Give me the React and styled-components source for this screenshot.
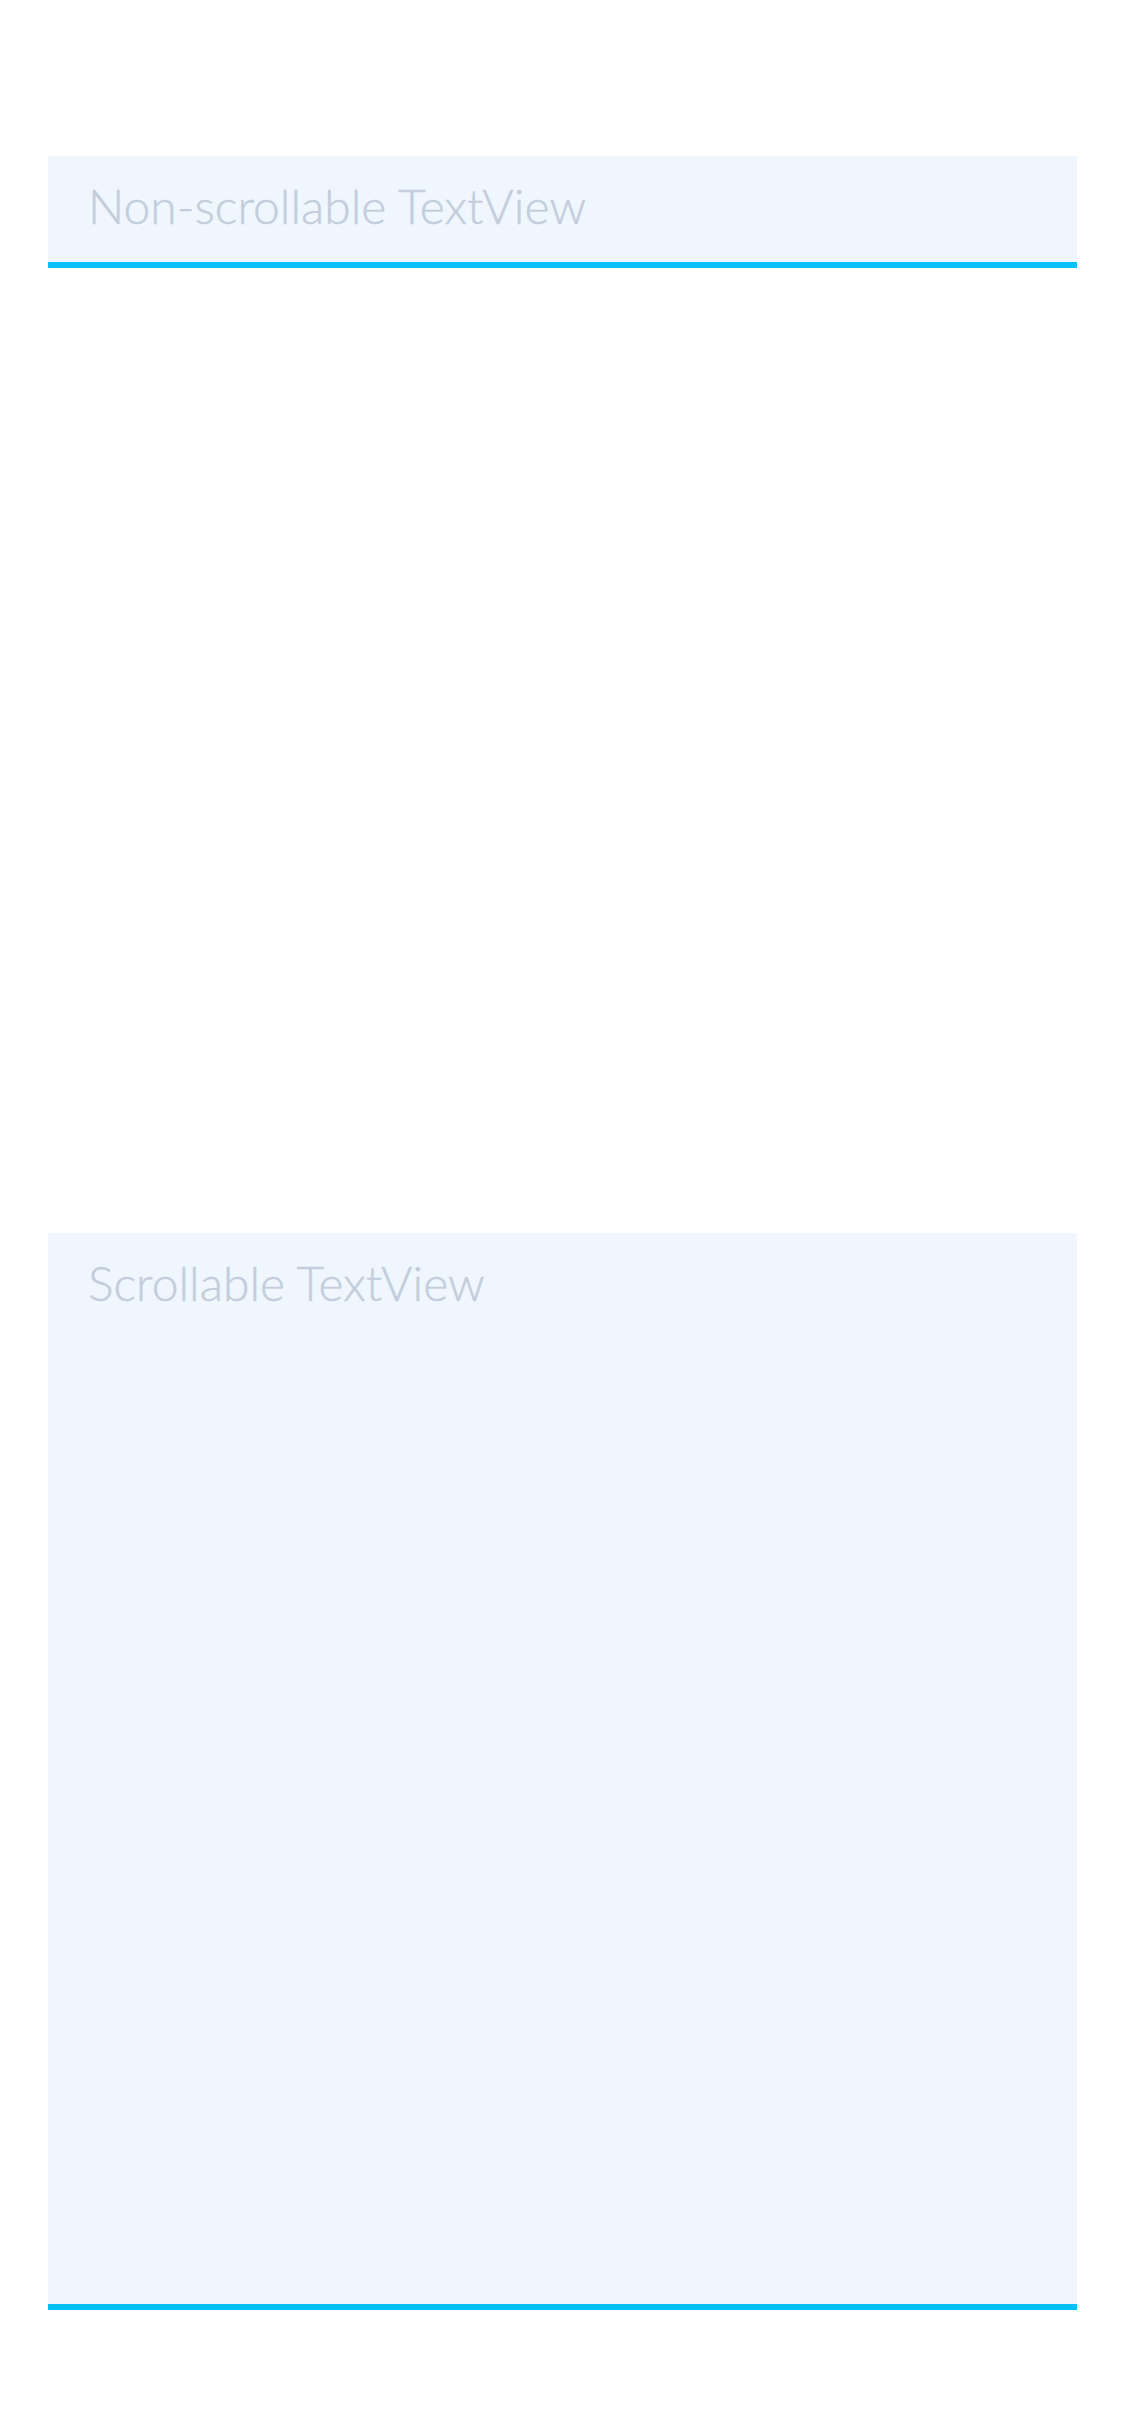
import React from "react";
import styled, { createGlobalStyle } from "styled-components";

const Global = createGlobalStyle`
  html, body {
    margin: 0;
    padding: 0;
    background: #ffffff;
  }
  body {
    font-family: "Lato", "Inter", "Noto Sans", sans-serif;
  }
`;

const Page = styled.main`
  display: block;
  width: 1125px;
  box-sizing: border-box;
  padding: 156px 48px 126px;
`;

const Field = styled.section`
  display: block;
  box-sizing: border-box;
  height: ${(p) => p.$h}px;
  margin-top: ${(p) => p.$top}px;
  background: #eff6fd;
  border-bottom: 6px solid #05c0fb;
  padding: 26px 40px 0;
`;

const Placeholder = styled.div`
  font-family: "Lato", "Inter", sans-serif;
  font-weight: 300;
  font-size: 48px;
  line-height: 48px;
  color: #c3cddb;
  white-space: nowrap;
  -webkit-text-stroke: 0.4px #c3cddb;
`;

export default function App() {
  return (
    <>
      <Global />
      <Page>
        <Field $h={112} $top={0}>
          <Placeholder>Non-scrollable TextView</Placeholder>
        </Field>
        <Field $h={1077} $top={965}>
          <Placeholder>Scrollable TextView</Placeholder>
        </Field>
      </Page>
    </>
  );
}
